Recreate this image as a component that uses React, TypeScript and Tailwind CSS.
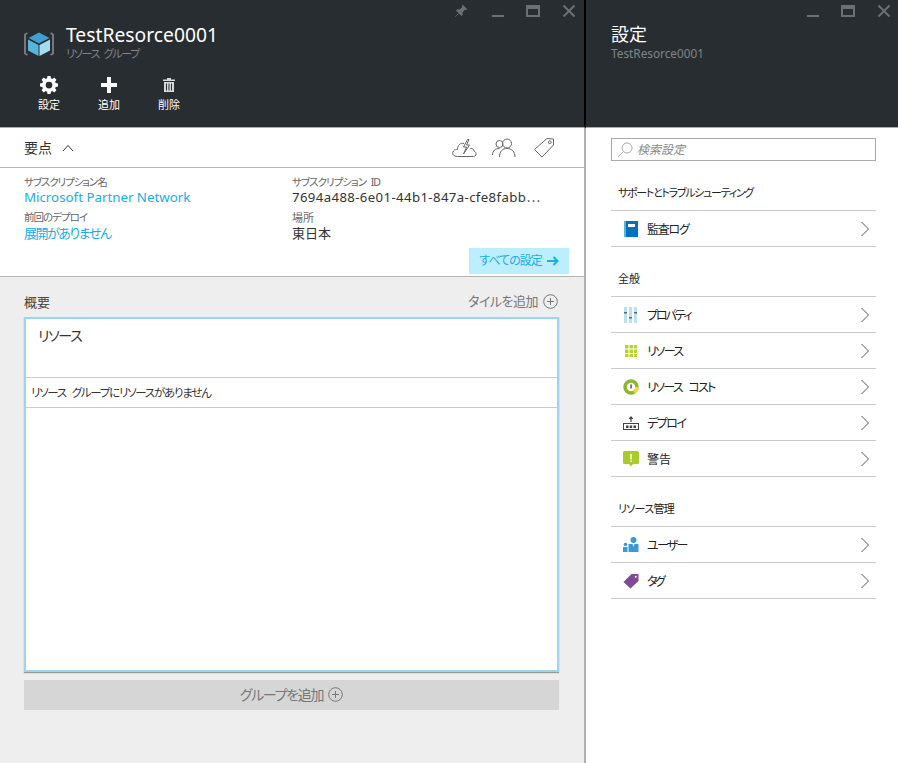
import React from "react";

const jp = "font-['Noto_Sans','Noto_Sans_CJK_JP',sans-serif] [font-feature-settings:'palt']";

function Win({ pin }: { pin?: boolean }) {
  return (
    <div className="flex h-[21px] items-center justify-end pt-[1px] text-[#6b7075]">
      {pin && (
        <svg width="16" height="16" viewBox="0 0 16 16" className="mr-[22px] mt-[-1px]" fill="#6b7075">
          <path d="M9.5 1.5 14.5 6.5 13 7 12.3 6.6 9.6 9.3 9.8 11.8 8.6 13 6 10.4 2.4 14 2 13.6 5.6 10 3 7.4 4.2 6.2 6.7 6.4 9.4 3.7 9 3Z" />
        </svg>
      )}
      <div className="ml-[1px] mt-[9px] h-[2px] w-[12px] bg-[#6b7075]" />
      <div className="ml-[22px] h-[12px] w-[14px] border-2 border-t-[4px] border-[#6b7075]" />
      <svg width="14" height="14" viewBox="0 0 14 14" className="ml-[22px]" stroke="#6b7075" strokeWidth="2" fill="none">
        <path d="M1.5 1.5 12.5 12.5M12.5 1.5 1.5 12.5" />
      </svg>
    </div>
  );
}

function Cube() {
  return (
    <svg width="30" height="28" viewBox="0 0 30 28">
      <path d="M3.500 3 1 4.500V23.500L3.500 25" fill="none" stroke="#74777b" strokeWidth="2" />
      <path d="M26.500 3 29 4.500V23.500L26.500 25" fill="none" stroke="#74777b" strokeWidth="2" />
      <path d="M15 2.500 25.500 8 15 13.500 4.500 8Z" fill="#3f9fd1" />
      <path d="M4 9.500 14.500 15V26L4 20.500Z" fill="#59b4d9" />
      <path d="M26 9.500 15.500 15V26L26 20.500Z" fill="#a7dcef" />
    </svg>
  );
}

function Cmd({ label, children }: { label: string; children: React.ReactNode }) {
  return (
    <div className="flex w-[60px] flex-col items-center">
      <div className="flex h-[18px] w-full items-center justify-center">{children}</div>
      <div className="mt-[3px] text-[11px] leading-[16px] text-white">{label}</div>
    </div>
  );
}

function Plus({ color = "#777", size = 15 }: { color?: string; size?: number }) {
  return (
    <svg width={size} height={size} viewBox="0 0 15 15" fill="none" stroke={color}>
      <circle cx="7.500" cy="7.500" r="6.800" />
      <path d="M7.500 4v7M4 7.500h7" />
    </svg>
  );
}

function Row({ label, icon, track = "tracking-[-1.5px]" }: { label: string; icon: React.ReactNode; track?: string }) {
  return (
    <div className="flex h-[36px] items-center border-b border-[#cccccc] pl-[10px] pr-[6px]">
      <div className="flex w-[26px] shrink-0 items-center justify-center pr-[6px]">{icon}</div>
      <div className={`flex-1 pt-[2px] text-[12px] text-[#222] ${track}`}>{label}</div>
      <svg width="10" height="16" viewBox="0 0 10 16" fill="none" stroke="#555" strokeWidth="1">
        <path d="M1.500 1 8.500 8 1.500 15" />
      </svg>
    </div>
  );
}

function Section({ title, track = "" }: { title: string; track?: string }) {
  return (
    <div className={`mt-[18px] flex h-[32px] items-center border-b border-[#cccccc] pl-[7px] text-[11px] text-[#222] ${track}`}>
      <span className="relative top-[-1px]">{title}</span>
    </div>
  );
}

export default function App() {
  return (
    <div className={`flex h-[763px] w-[898px] overflow-hidden bg-white ${jp}`}>
      {/* Left blade */}
      <div className="flex w-[586px] shrink-0 flex-col">
        <div className="flex h-[128px] shrink-0 flex-col border-r-2 border-b border-r-black border-b-[#aaaaaa] bg-[#282d32] pr-[8px]">
          <Win pin />
          <div className="ml-[24px] mt-[2px] flex items-start">
            <div className="mt-[7px]"><Cube /></div>
            <div className="ml-[12px]">
              <div className="text-[19.3px] leading-[24px] text-white">TestResorce0001</div>
              <div className="h-[13px] text-[11px] leading-[13px] tracking-[-1.3px] text-[#7f8489] [word-spacing:3px]">リソース グループ</div>
            </div>
          </div>
          <div className="ml-[19px] mt-[16px] flex">
            <Cmd label="設定">
              <svg width="18" height="18" viewBox="0 0 24 24" fill="#fff">
                <path fillRule="evenodd" d="M10 1h4l.6 3.100 1.800.8L19 3.100 21.900 6l-1.800 2.600.8 1.800L24 11v4l-3.100.6-.8 1.800 1.800 2.600L19 22.900l-2.600-1.800-1.800.8L14 25h-4l-.6-3.100-1.800-.8L5 22.900 2.100 20l1.800-2.600-.8-1.800L0 15v-4l3.100-.6.8-1.800L2.100 6 5 3.100l2.600 1.800 1.800-.8ZM12 8.500a4.500 4.500 0 1 0 0 9 4.500 4.500 0 0 0 0-9Z" transform="translate(0 -1)" />
              </svg>
            </Cmd>
            <Cmd label="追加">
              <svg width="16" height="16" viewBox="0 0 16 16" fill="#fff">
                <path d="M6 0h4v6h6v4h-6v6H6v-6H0V6h6Z" />
              </svg>
            </Cmd>
            <Cmd label="削除">
              <svg width="12" height="14" viewBox="0 0 12 14" fill="#d8d8d8">
                <path d="M4 0h4v1.500h4v1.500H0V1.500h4ZM1 4h10v10H1ZM3 5.500v7h1v-7ZM5.500 5.500v7h1v-7ZM8 5.500v7h1v-7Z" fillRule="evenodd" />
              </svg>
            </Cmd>
          </div>
        </div>

        <div className="flex min-h-0 flex-1 flex-col border-r-2 border-r-[#b0b0b0] bg-[#eeeeee]">
          <div className="flex h-[40px] shrink-0 items-center border-b border-[#b5b5b5] bg-white pl-[24px] pr-[29px]">
            <span className="text-[14px] text-[#333]">要点</span>
            <svg width="12" height="8" viewBox="0 0 12 8" fill="none" stroke="#333" className="ml-[10px]">
              <path d="M1 7 6 1.500 11 7" />
            </svg>
            <div className="ml-auto flex items-center">
              <svg width="27" height="20" viewBox="0 0 26 20" fill="none" stroke="#666">
                <path d="M6 18.500H22C25 18.500 25.500 14 22.500 13 22 10 19 10 18.500 11M6 18.500C2 18.500 0 15.500 2 13 3 11.500 5 11.500 6 11.500 6 7 9 4.500 12.500 5.500" />
                <path d="M16 1.500 12 9h3l-3 7 6-9h-3l2.500-5.500Z" />
              </svg>
              <svg width="26" height="20" viewBox="0 0 25 20" fill="none" stroke="#666" className="ml-[13px]">
                <circle cx="8" cy="6" r="3.500" />
                <path d="M1 17c0-4.500 3-6.500 7-6.500" />
                <circle cx="15.500" cy="5.500" r="4.500" />
                <path d="M8 19c0-5.500 3-8.500 7.500-8.500S23.500 13.500 23.500 19" />
              </svg>
              <svg width="22" height="22" viewBox="0 0 22 22" fill="none" stroke="#666" className="ml-[16px]">
                <path d="M14 1.500 20.500 2 20.500 8 9 20 1.500 12.500Z" />
                <circle cx="16.800" cy="5.200" r="1.400" />
              </svg>
            </div>
          </div>

          <div className="flex h-[109px] shrink-0 flex-col border-b border-[#b5b5b5] bg-white pl-[24px] pr-[15px] pt-[7px]">
            <div className="grid grid-cols-[268px_1fr]">
              <div>
                <div className="text-[10.5px] leading-[14px] tracking-[-1.1px] text-[#666]">サブスクリプション名</div>
                <div className="text-[13.3px] leading-[16px] text-[#15aeea]">Microsoft Partner Network</div>
              </div>
              <div>
                <div className="text-[10.5px] leading-[14px] tracking-[-1px] text-[#666] [word-spacing:3px]">サブスクリプション ID</div>
                <div className="w-[252px] whitespace-nowrap text-[13.2px] leading-[16px] tracking-[0.38px] text-[#333]">7694a488-6e01-44b1-847a-cfe8fabb⋯</div>
              </div>
              <div className="mt-[6px]">
                <div className="text-[10.5px] leading-[13px] tracking-[-1px] text-[#666]">前回のデプロイ</div>
                <div className="text-[13px] leading-[18px] tracking-[-1.5px] text-[#15aeea]">展開がありません</div>
              </div>
              <div className="mt-[6px]">
                <div className="text-[11px] leading-[13px] text-[#666]">場所</div>
                <div className="text-[13px] leading-[18px] text-[#333]">東日本</div>
              </div>
            </div>
            <div className="mt-[6px] flex h-[26px] w-[100px] items-center justify-center self-end bg-[#bdeefe] text-[12px] tracking-[-1px] text-[#19aee8]">
              すべての設定
              <svg width="12" height="10" viewBox="0 0 12 10" fill="none" stroke="#19aee8" strokeWidth="2" className="ml-[5px]">
                <path d="M0 5h10M6.500 1 10.500 5 6.500 9" />
              </svg>
            </div>
          </div>

          <div className="flex-1 pl-[24px] pr-[25px] pt-[15px]">
            <div className="flex h-[25px] items-center justify-between pb-[4px]">
              <span className="text-[13px] text-[#444]">概要</span>
              <span className="mr-[1px] mt-[-2px] flex items-center text-[13px] tracking-[-0.5px] text-[#777]">
                タイルを追加
                <span className="ml-[5px]"><Plus /></span>
              </span>
            </div>
            <div className="flex h-[355px] flex-col border-2 border-[#9ad5f2] bg-white shadow-[0_1px_1px_#999]">
              <div className="h-[59px] shrink-0 border-b border-[#cccccc] pl-[12px] pt-[6px] text-[14px] tracking-[-1.3px] text-[#333]">リソース</div>
              <div className="flex h-[30px] shrink-0 items-center border-b border-[#cccccc] pl-[5px] text-[11.5px] tracking-[-1.25px] text-[#333] [word-spacing:4px]">リソース グループにリソースがありません</div>
            </div>
            <div className="mt-[8px] flex h-[30px] items-center justify-center bg-[#d6d6d6] pb-[1px] text-[14px] tracking-[-1.3px] text-[#777]">
              グループを追加
              <span className="ml-[5px]"><Plus /></span>
            </div>
          </div>
        </div>
      </div>

      {/* Right blade */}
      <div className="flex min-w-0 flex-1 flex-col">
        <div className="h-[128px] shrink-0 border-b border-[#aaaaaa] bg-[#282d32] pr-[7px]">
          <Win />
          <div className="ml-[25px] mt-[2px] text-[18px] leading-[22px] text-white">設定</div>
          <div className="ml-[25px] mt-[1px] text-[11.8px] leading-[14px] text-[#7f8489]">TestResorce0001</div>
        </div>
        <div className="px-[25px] pr-[22px] pt-[10px]">
          <div className="flex h-[23px] items-center border border-[#aaaaaa] pl-[5px] text-[12px] italic text-[#888]">
            <svg width="16" height="16" viewBox="0 0 16 16" fill="none" stroke="#aaa" className="mr-[4px]">
              <circle cx="10" cy="6" r="5" />
              <path d="M6.300 9.700 1 15" />
            </svg>
            検索設定
          </div>
          <Section title="サポートとトラブルシューティング" track="tracking-[-1.3px]" />
          <Row
            label="監査ログ"
            track="tracking-[-1.25px]"
            icon={
              <svg width="14" height="16" viewBox="0 0 14 16">
                <rect width="14" height="16" fill="#0072c6" />
                <rect width="2" height="16" fill="#59b4d9" />
                <rect x="4" y="3" width="7" height="3" fill="#fff" />
              </svg>
            }
          />
          <Section title="全般" />
          <Row
            label="プロパティ"
            track="tracking-[-2px]"
            icon={
              <svg width="14" height="16" viewBox="0 0 14 16">
                <rect x="0" width="3" height="16" fill="#b8e2f3" />
                <rect x="5" width="3" height="16" fill="#b8e2f3" />
                <rect x="10" width="3" height="16" fill="#b8e2f3" />
                <rect x="0" y="5" width="3" height="1.500" fill="#666" />
                <rect x="5" y="10" width="3" height="1.500" fill="#666" />
                <rect x="10" y="5" width="3" height="1.500" fill="#666" />
              </svg>
            }
          />
          <Row
            label="リソース"
            icon={
              <svg width="12" height="12" viewBox="0 0 12 12" fill="#b8d432">
                {[0, 4.500, 9].map((x) =>
                  [0, 4.500, 9].map((y) => <rect key={`${x}-${y}`} x={x} y={y} width="3.500" height="3.500" />)
                )}
              </svg>
            }
          />
          <Row
            label="リソース コスト"
            track="tracking-[-1.7px] [word-spacing:5px]"
            icon={
              <svg width="16" height="16" viewBox="0 0 16 16" fill="none">
                <circle cx="8" cy="8" r="6" stroke="#8ab82e" strokeWidth="3.500" />
                <path d="M14 8a6 6 0 0 1-3 5.200" stroke="#ffd23f" strokeWidth="3.500" />
                <rect x="7.300" y="5.500" width="1.500" height="4" fill="#555" />
              </svg>
            }
          />
          <Row
            label="デプロイ"
            icon={
              <svg width="16" height="14" viewBox="0 0 16 14">
                <path d="M8 0 10.500 3H8.600V6H7.400V3H5.500Z" fill="#444" />
                <rect x="0.500" y="7.500" width="15" height="6" fill="none" stroke="#444" />
                <rect x="3" y="9.500" width="2.500" height="2.500" fill="#444" />
                <rect x="6.700" y="9.500" width="2.500" height="2.500" fill="#444" />
                <rect x="10.500" y="9.500" width="2.500" height="2.500" fill="#444" />
              </svg>
            }
          />
          <Row
            label="警告"
            track=""
            icon={
              <svg width="16" height="16" viewBox="0 0 16 16">
                <path d="M1.500 0h13A1.500 1.500 0 0 1 16 1.500v10a1.500 1.500 0 0 1-1.500 1.500H10L8 15.500 6 13H1.500A1.500 1.500 0 0 1 0 11.500v-10A1.500 1.500 0 0 1 1.500 0Z" fill="#a9cc2b" />
                <rect x="7.300" y="3" width="1.500" height="5.500" fill="#fff" />
                <rect x="7.300" y="9.500" width="1.500" height="1.500" fill="#fff" />
              </svg>
            }
          />
          <Section title="リソース管理" track="tracking-[-0.7px]" />
          <Row
            label="ユーザー"
            track="tracking-[-1.75px]"
            icon={
              <svg width="16" height="15" viewBox="0 0 16 15" fill="#3b9ad2">
                <circle cx="10.500" cy="3" r="3" />
                <path d="M5.500 7h10v8h-10Z" />
                <circle cx="2.500" cy="7.500" r="1.800" />
                <path d="M0 10h4.500v5H0Z" />
                <path d="M9.500 7h2l-1 3Z" fill="#fff" />
              </svg>
            }
          />
          <Row
            label="タグ"
            track="tracking-[-2.5px]"
            icon={
              <svg width="16" height="16" viewBox="0 0 16 16">
                <path d="M8.500 1 15.500 1 15.500 8 7.500 15.500 0.500 9Z" fill="#804998" />
                <circle cx="12.800" cy="3.700" r="1" fill="#fff" />
              </svg>
            }
          />
        </div>
      </div>
    </div>
  );
}
